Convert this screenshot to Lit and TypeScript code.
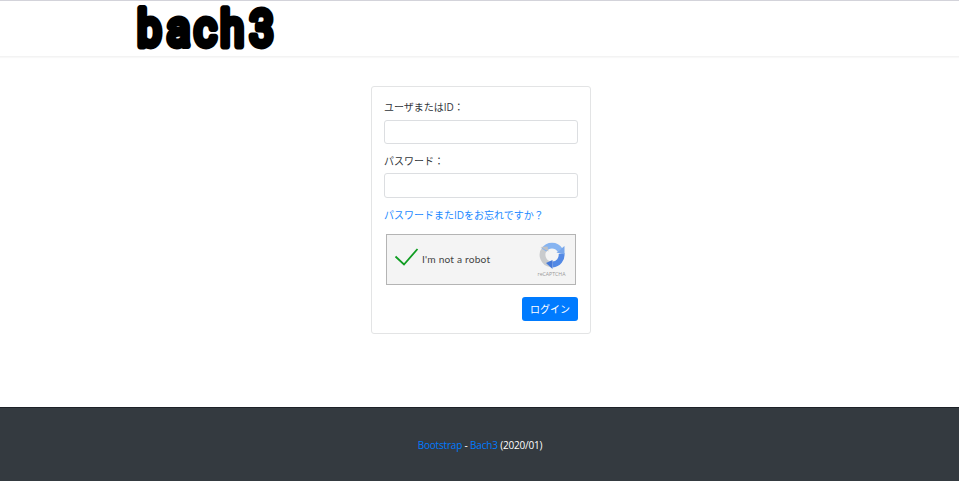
import { LitElement, html, css } from "lit";
import { customElement } from "lit/decorators.js";

@customElement("app-root")
class AppRoot extends LitElement {
  static styles = css`
    :host {
      display: flex;
      flex-direction: column;
      height: 481px;
      overflow: hidden;
      background: #fff;
      color: #212529;
      font: 10px/15px "Open Sans", "Noto Sans CJK JP", sans-serif;
    }
    * { box-sizing: border-box; }
    a { color: #007bff; text-decoration: none; }
    header {
      flex: none;
      height: 57px;
      border-top: 1px solid #d3d3da;
      border-bottom: 1px solid #f3f3f3;
      box-shadow: 0 1px 1px #f8f8f8;
      padding-left: 130px;
    }
    .logo { display: block; overflow: visible; }
    .logo text {
      font-family: Roboto, sans-serif;
      font-weight: 400;
      font-size: 49px;
      stroke: #000;
      stroke-width: 6.8px;
      stroke-linejoin: round;
    }
    main { flex: 1; padding: 29px 0 0 371px; }
    form {
      width: 220px;
      height: 248px;
      border: 1px solid #e3e4e5;
      border-radius: 3px;
      padding: 13px 12px 12px;
      display: flex;
      flex-direction: column;
    }
    label, .forgot { display: block; flex: none; height: 15px; white-space: nowrap; }
    label { color: #30343a; }
    .forgot { color: #1a88ff; }
    input {
      display: block;
      flex: none;
      width: 194px;
      height: 24px;
      margin: 5px 0 10px;
      border: 1px solid #dcdee1;
      border-radius: 3px;
      padding: 0 8px;
      background: #fff;
    }
    .second { height: 25px; margin: 4px 0 10px; }
    .captcha {
      margin: 11px 2px 12px;
      width: 190px;
      height: 51px;
      flex: none;
      border: 1px solid #b4b4b4;
      background: #f4f4f4;
      display: flex;
      align-items: center;
      color: #444;
      padding: 0 7px;
    }
    .tick { margin-right: 3px; margin-top: -5px; }
    .robot { font: 10.2px/15px Lato, sans-serif; letter-spacing: .18px; flex: 1; }
    .brand { display: flex; flex-direction: column; align-items: center; width: 33px; color: #999; font: 5.2px/7px "Open Sans", sans-serif; }
    .brand span { margin-top: 2px; }
    button {
      align-self: flex-end;
      width: 56px;
      height: 24px;
      padding: 0 0 1px;
      border: 0;
      border-radius: 3px;
      background: #007bff;
      color: #fff;
      font: 10px/15px "Noto Sans CJK JP", sans-serif;
    }
    footer {
      flex: none;
      height: 75px;
      margin-bottom: -1px;
      border-top: 1px solid #1d2128;
      background: #343a40;
      color: #fff;
      display: flex;
      align-items: center;
      justify-content: center;
      font: 10px/15px "Open Sans", sans-serif;
      letter-spacing: -.19px;
      padding-left: 1px;
      white-space: pre;
    }
  `;

  render() {
    return html`
      <header>
        <svg class="logo" width="150" height="54" viewBox="130 1 150 54" aria-label="bach3">
          <text transform="translate(0 46.400) scale(.88 1.01)" x="156 189.600 220.600 250.200 283.600">bach3</text>
        </svg>
      </header>
      <main>
        <form @submit=${(e: Event) => e.preventDefault()}>
          <label for="user">ユーザまたはID：</label>
          <input id="user" />
          <label for="pass">パスワード：</label>
          <input class="second" id="pass" type="password" />
          <a class="forgot" href="#">パスワードまたIDをお忘れですか？</a>
          <div class="captcha">
            <svg class="tick" width="25" height="20" viewBox="0 0 25 20">
              <path d="M1.500 9.500 10 17.500 23.500 2" fill="none" stroke="#109d22" stroke-width="1.8" />
            </svg>
            <span class="robot">I'm not a robot</span>
            <div class="brand">
              <svg width="28" height="28" viewBox="0 0 28 28">
                <g fill="none" stroke-width="5.8">
                  <path d="M13 23.400A9.500 9.500 0 0 1 7 7.600" stroke="#c9cbcd" />
                  <path d="M6 9A9.500 9.500 0 0 1 22 9" stroke="#86b4f1" />
                  <path d="M23.500 12.500A9.500 9.500 0 0 1 14.500 23.500" stroke="#5389e5" />
                </g>
                <path d="M2.500 6 9.500 5.500 10.500 10.500Z" fill="#bfc1c4" />
                <path d="M26.500 5V13.500L18.500 11.500Z" fill="#79a7eb" />
                <path d="M14.500 19V28L8 22Z" fill="#4679d7" />
              </svg>
              <span>reCAPTCHA</span>
            </div>
          </div>
          <button type="submit">ログイン</button>
        </form>
      </main>
      <footer><a href="#">Bootstrap</a> - <a href="#">Bach3</a> (2020/01)</footer>
    `;
  }
}
